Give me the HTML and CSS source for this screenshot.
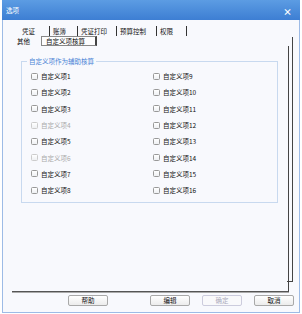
FILE: index.html
```html
<!DOCTYPE html>
<html>
<head>
<meta charset="utf-8">
<link rel="stylesheet" href="styles.css">
</head>
<body>
<div class="window">
  <div class="titlebar">
    <span class="title">选项</span>
    <span class="close">×</span>
  </div>
  <div class="body">
    <div class="tabs">
      <div class="tabrow row1">
        <span class="tab t1">凭证</span>
        <span class="tab t2">账簿</span>
        <span class="tab t3">凭证打印</span>
        <span class="tab t4">预算控制</span>
        <span class="tab t5">权限</span>
      </div>
      <div class="tabrow row2">
        <span class="tab t6">其他</span>
        <span class="tab active">自定义项核算</span>
      </div>
    </div>
    <div class="panel">
      <fieldset class="group">
        <legend>自定义项作为辅助核算</legend>
        <div class="grid">
          <label class="item"><span class="cb"></span>自定义项1</label>
          <label class="item"><span class="cb"></span>自定义项9</label>
          <label class="item"><span class="cb"></span>自定义项2</label>
          <label class="item"><span class="cb"></span>自定义项10</label>
          <label class="item"><span class="cb"></span>自定义项3</label>
          <label class="item"><span class="cb"></span>自定义项11</label>
          <label class="item disabled"><span class="cb"></span>自定义项4</label>
          <label class="item"><span class="cb"></span>自定义项12</label>
          <label class="item"><span class="cb"></span>自定义项5</label>
          <label class="item"><span class="cb"></span>自定义项13</label>
          <label class="item disabled"><span class="cb"></span>自定义项6</label>
          <label class="item"><span class="cb"></span>自定义项14</label>
          <label class="item"><span class="cb"></span>自定义项7</label>
          <label class="item"><span class="cb"></span>自定义项15</label>
          <label class="item"><span class="cb"></span>自定义项8</label>
          <label class="item"><span class="cb"></span>自定义项16</label>
        </div>
      </fieldset>
    </div>
    <div class="buttons">
      <button class="btn help">帮助</button>
      <button class="btn edit">编辑</button>
      <button class="btn" disabled>确定</button>
      <button class="btn">取消</button>
    </div>
  </div>
</div>
</body>
</html>
```

FILE: styles.css
```css
* { box-sizing: border-box; }
html, body {
  margin: 0;
  padding: 0;
  background: #ffffff;
  font-family: "Noto Sans CJK SC", "Noto Sans", sans-serif;
  font-size: 6.5px;
  color: #111;
}
.window {
  margin-left: 2px;
  width: 298px;
  height: 313px;
  border: 1px solid #9dbbe6;
  border-top: none;
  background: #f8f9fd;
  display: flex;
  flex-direction: column;
}
.titlebar {
  height: 20px;
  margin: 0 -1px;
  background: linear-gradient(#5c9ce3, #3d7ed3);
  display: flex;
  align-items: center;
  justify-content: space-between;
  padding: 0 8px 0 4px;
  color: #fff;
}
.title { font-size: 6.5px; }
.close { font-size: 9px; font-weight: bold; line-height: 1; margin-top: 3px; }
.body {
  flex: 1;
  display: flex;
  flex-direction: column;
  padding: 6px 0 0 9px;
}
.tabs { display: flex; flex-direction: column; }
.tabrow { display: flex; height: 10px; align-items: stretch; }
.tab {
  flex: none;
  line-height: 10px;
  white-space: nowrap;
}
.row1 { padding-left: 10px; }
.row1 .tab { border-right: 1px solid #333; padding-left: 3px; }
.row1 .t1 { width: 28px; padding-left: 0; }
.row1 .t2 { width: 28px; }
.row1 .t3 { width: 39px; }
.row1 .t4 { width: 40px; }
.row1 .t5 { width: 30px; }
.row2 { padding-left: 5px; }
.t6 { width: 24px; }
.tab.active {
  width: 56px;
  border: 1px solid #888;
  border-right: 2px solid #444;
  background: #fdfdfe;
  padding-left: 4px;
  line-height: 8px;
}
.panel {
  position: relative;
  width: 277px;
  height: 246px;
  border-right: 1px solid #444;
  border-bottom: 1px solid #555;
  box-shadow: 0 1px 0 #aaa;
  padding: 11px 0 0 9px;
}
.panel::before {
  content: "";
  position: absolute;
  top: -9px;
  right: -5px;
  bottom: 9px;
  width: 5px;
  border-right: 1px solid #444;
  border-bottom: 1px solid #444;
}
.group {
  margin: 0;
  width: 257px;
  height: 146px;
  border: 1px solid #c8d9ef;
  padding: 3px 0 0 9px;
}
.group legend {
  color: #4a84d6;
  padding: 0 2px;
  margin-left: -4px;
  line-height: 8px;
}
.grid {
  display: grid;
  grid-template-columns: 122px 122px;
  grid-auto-rows: 16.3px;
}
.item {
  display: flex;
  align-items: center;
  gap: 3px;
  color: #111;
}
.item.disabled { color: #aaa; }
.cb {
  width: 7px;
  height: 7px;
  border: 1px solid #999;
  border-radius: 1.5px;
  background: linear-gradient(#ffffff, #eef0f3);
}
.item.disabled .cb { border-color: #ccc; }
.buttons {
  display: flex;
  padding-top: 3px;
  margin-left: -9px;
}
.btn {
  height: 11px;
  width: 40px;
  padding: 0;
  font-family: inherit;
  font-size: 6.5px;
  line-height: 9px;
  color: #111;
  border: 1px solid #a9a9a9;
  border-radius: 2px;
  background: linear-gradient(#ffffff, #ececec);
  margin-left: 12px;
}
.btn.help { margin-left: 65px; }
.btn.edit { margin-left: 42px; }
.btn:disabled { color: #aab; border-color: #ccd; background: #f9f9fb; }
```
